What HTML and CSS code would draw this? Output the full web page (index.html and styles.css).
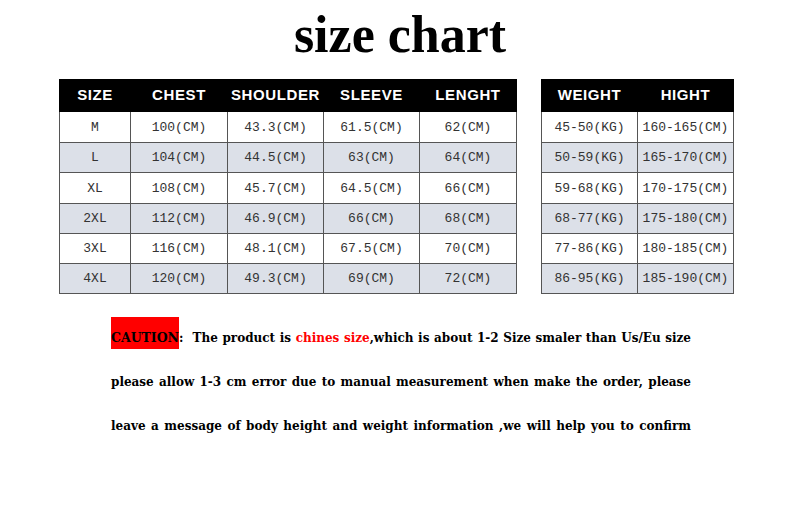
FILE: index.html
```html
<!DOCTYPE html>
<html>
<head>
<meta charset="utf-8">
<link rel="stylesheet" href="styles.css">
</head>
<body>
<h1 class="title">size chart</h1>
<div class="tables">
  <table class="chart main">
    <colgroup><col class="c1"><col class="c2"><col class="c3"><col class="c4"><col class="c5"></colgroup>
    <tr class="head"><th>SIZE</th><th>CHEST</th><th>SHOULDER</th><th>SLEEVE</th><th>LENGHT</th></tr>
    <tr class="tall"><td>M</td><td>100(CM)</td><td>43.3(CM)</td><td>61.5(CM)</td><td>62(CM)</td></tr>
    <tr class="alt"><td>L</td><td>104(CM)</td><td>44.5(CM)</td><td>63(CM)</td><td>64(CM)</td></tr>
    <tr class="tall"><td>XL</td><td>108(CM)</td><td>45.7(CM)</td><td>64.5(CM)</td><td>66(CM)</td></tr>
    <tr class="alt"><td>2XL</td><td>112(CM)</td><td>46.9(CM)</td><td>66(CM)</td><td>68(CM)</td></tr>
    <tr><td>3XL</td><td>116(CM)</td><td>48.1(CM)</td><td>67.5(CM)</td><td>70(CM)</td></tr>
    <tr class="alt"><td>4XL</td><td>120(CM)</td><td>49.3(CM)</td><td>69(CM)</td><td>72(CM)</td></tr>
  </table>
  <table class="chart side">
    <colgroup><col class="c6"><col class="c7"></colgroup>
    <tr class="head"><th>WEIGHT</th><th>HIGHT</th></tr>
    <tr class="tall"><td>45-50(KG)</td><td>160-165(CM)</td></tr>
    <tr class="alt"><td>50-59(KG)</td><td>165-170(CM)</td></tr>
    <tr class="tall"><td>59-68(KG)</td><td>170-175(CM)</td></tr>
    <tr class="alt"><td>68-77(KG)</td><td>175-180(CM)</td></tr>
    <tr><td>77-86(KG)</td><td>180-185(CM)</td></tr>
    <tr class="alt"><td>86-95(KG)</td><td>185-190(CM)</td></tr>
  </table>
</div>
<div class="note">
  <p class="line"><span class="caution">CAUTION</span>:&nbsp; The product is <span class="red">chines size</span>,which is about 1-2 Size smaler than Us/Eu size</p>
  <p class="line">please allow 1-3 cm error due to manual measurement when make the order, please</p>
  <p class="line">leave a message of body height and weight information ,we will help you to confirm</p>
</div>
</body>
</html>
```
FILE: styles.css
```css
html, body {
  margin: 0;
  padding: 0;
  background: #ffffff;
}
.title {
  margin: 0;
  padding-top: 5px;
  height: 73px;
  box-sizing: border-box;
  text-align: center;
  font-family: "Liberation Serif", serif;
  font-weight: bold;
  font-size: 52px;
  line-height: 60px;
  color: #000;
}
.tables {
  display: flex;
  gap: 24px;
  padding-left: 59px;
  margin-top: 6px;
}
.chart {
  border-collapse: collapse;
  table-layout: fixed;
  border: 1px solid #555;
}
.main { width: 457px; }
.side { width: 192px; }
.c1 { width: 71px; }
.c2 { width: 97px; }
.c3 { width: 96px; }
.c4 { width: 96px; }
.c5 { width: 97px; }
.c6 { width: 96px; }
.c7 { width: 96px; }
.chart th {
  background: #000;
  color: #fff;
  font-family: "Liberation Sans", Arial, sans-serif;
  font-weight: bold;
  font-size: 15px;
  letter-spacing: 0.6px;
  height: 28px;
  padding: 0 0 3px 0;
  text-align: center;
  border: 1px solid #000;
}
.chart td {
  height: 29px;
  padding: 0;
  text-align: center;
  font-family: "Liberation Mono", monospace;
  font-size: 13px;
  color: #333;
  border: 1px solid #555;
}
.chart .tall td {
  height: 30px;
}
.chart .alt td {
  background: #dce0e8;
}
.note {
  margin-top: 22px;
  padding-left: 111px;
  width: 580px;
}
.line {
  margin: 0;
  height: 44px;
  line-height: 44px;
  font-family: "DejaVu Serif", serif;
  font-weight: bold;
  font-size: 12px;
  color: #000;
  text-align: justify;
  text-align-last: justify;
  white-space: nowrap;
}
.caution {
  display: inline-block;
  background: #ff0000;
  line-height: 14px;
  padding: 14px 0 4px;
  font-size: 12.5px;
}
.red {
  color: #ff0000;
}
```
